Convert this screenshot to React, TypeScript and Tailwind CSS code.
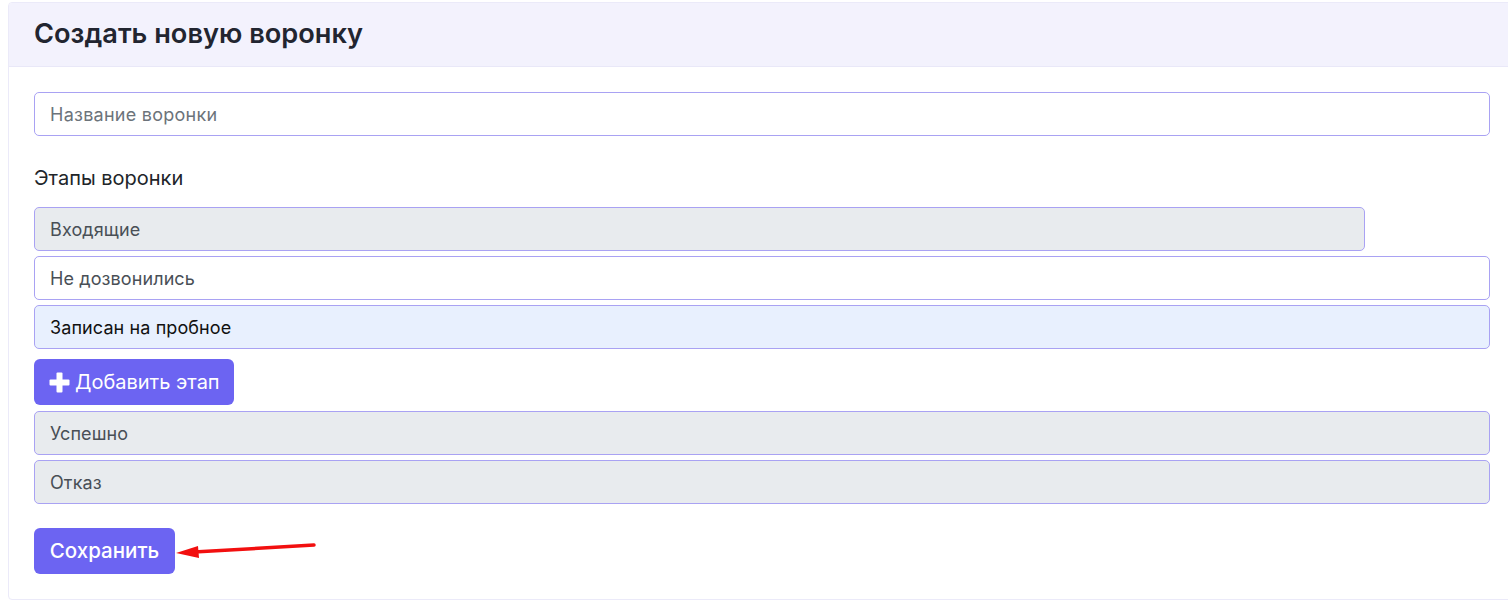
import React from "react";

const stageBase =
  "h-[44px] flex items-center px-[15px] rounded-[5px] border border-[#a9a2f3] text-[18px] tracking-[0.1px]";

export default function App() {
  return (
    <div className="w-[1508px] h-[604px] overflow-hidden bg-white" style={{ fontFamily: "Inter, 'Noto Sans', sans-serif" }}>
      <div className="ml-[8px] mt-[2px] w-[1510px] h-[598px] border border-[#ebeaf9] rounded-[4px] overflow-hidden">
        <div className="h-[64px] bg-[#f3f2fd] border-b border-[#e9e8f8] flex items-center px-[25px]">
          <h1 className="text-[27.2px] font-semibold text-[#222530]">Создать новую воронку</h1>
        </div>
        <div className="pl-[25px] pr-[25px] pt-[25px] relative">
          <div className="w-[1456px]">
            <div className="h-[44px] flex items-center px-[15px] rounded-[5px] border border-[#a9a2f3] bg-white text-[18px] tracking-[0.25px] text-[#6c737a]">
              Название воронки
            </div>
            <div className="mt-[30px] text-[20px] text-[#212529] leading-[24px]">Этапы воронки</div>
            <div className="mt-[17px] flex flex-col gap-[5px]">
              <div className={`${stageBase} w-[1331px] bg-[#e8ebee] text-[#494f56]`}>Входящие</div>
              <div className={`${stageBase} bg-white text-[#494f56]`}>Не дозвонились</div>
              <div className={`${stageBase} bg-[#e8f0fe] text-[#111]`}>Записан на пробное</div>
              <button className="mt-[5px] mb-[1px] w-[200px] h-[46px] rounded-[6px] bg-[#6c64f2] text-white text-[20px] flex items-center gap-[5px] pl-[15px]">
                <svg width="21" height="21" viewBox="0 0 21 21">
                  <rect x="7.5" y="0.5" width="6" height="20" rx="1" fill="white" />
                  <rect x="0.5" y="7.5" width="20" height="6" rx="1" fill="white" />
                </svg>
                Добавить этап
              </button>
              <div className={`${stageBase} bg-[#e8ebee] text-[#494f56]`}>Успешно</div>
              <div className={`${stageBase} bg-[#e8ebee] text-[#494f56]`}>Отказ</div>
            </div>
            <div className="mt-[24px] flex items-center">
              <button className="w-[141px] h-[46px] rounded-[6px] bg-[#6c64f2] text-white text-[20.5px] font-medium">
                Сохранить
              </button>
              <svg width="150" height="20" viewBox="0 0 150 20" className="-ml-[1px]">
                <line x1="140" y1="4" x2="20" y2="11" stroke="#f20f0f" strokeWidth="3.5" strokeLinecap="round" />
                <polygon points="2,12 24,5 25,17" fill="#f20f0f" />
              </svg>
            </div>
          </div>
        </div>
      </div>
    </div>
  );
}
